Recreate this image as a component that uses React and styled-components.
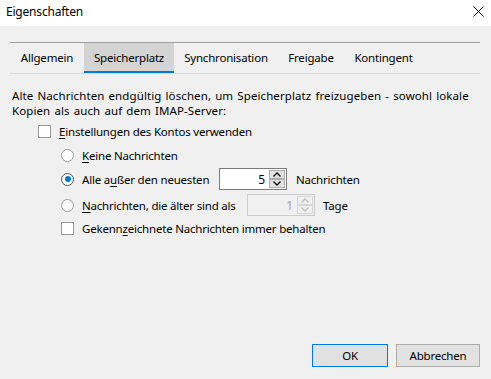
import React from 'react'
import styled, { createGlobalStyle } from 'styled-components'

const GlobalStyle = createGlobalStyle`
  html, body {
    margin: 0;
    padding: 0;
    background: #f0f0f0;
  }
  body {
    font-family: "Noto Sans", "Segoe UI", sans-serif;
    font-size: 11.5px;
    letter-spacing: -0.2px;
    color: #000;
  }
`;

const tabs = [
  { label: 'Allgemein', width: 74 },
  { label: 'Speicherplatz', width: 90, active: true },
  { label: 'Synchronisation', width: 104 },
  { label: 'Freigabe', width: 66 },
  { label: 'Kontingent', width: 79 },
];

function Chevron({ up, disabled }) {
  return (
    <svg width="8" height="5" viewBox="0 0 8 5">
      <polyline
        points={up ? '0.5,4.5 4,1 7.5,4.5' : '0.5,0.5 4,4 7.5,0.5'}
        fill="none"
        stroke={disabled ? '#bfbfbf' : '#000'}
        strokeWidth="1.3"
      />
    </svg>
  );
}

function Spin({ value, disabled }) {
  return (
    <SpinBox $disabled={disabled}>
      <SpinValue $disabled={disabled}>{value}</SpinValue>
      <SpinButtons>
        <SpinButton $disabled={disabled}><Chevron up disabled={disabled} /></SpinButton>
        <SpinButton $disabled={disabled}><Chevron disabled={disabled} /></SpinButton>
      </SpinButtons>
    </SpinBox>
  );
}

function App() {
  return (
    <Window>
      <GlobalStyle />
      <TitleBar>
        <Title>Eigenschaften</Title>
        <svg width="11" height="11" viewBox="0 0 11 11">
          <path d="M0.5 0.5 L10.5 10.5 M10.5 0.5 L0.5 10.5" stroke="#000" strokeWidth="1" />
        </svg>
      </TitleBar>
      <Body>
        <TabStrip>
          {tabs.map(t => (
            <Tab key={t.label} $active={t.active} style={{ width: t.width }}>
              {t.label}
            </Tab>
          ))}
        </TabStrip>
        <Panel>
          <Description>
            Alte Nachrichten endgültig löschen, um Speicherplatz freizugeben - sowohl lokale<br />
            Kopien als auch auf dem IMAP-Server:
          </Description>
          <Row $h={23} $indent={26} $top={2}>
            <CheckBox />
            <Label><u>E</u>instellungen des Kontos verwenden</Label>
          </Row>
          <Row $h={24} $indent={49}>
            <Radio />
            <Label><u>K</u>eine Nachrichten</Label>
          </Row>
          <Row $h={24} $indent={49}>
            <Radio $checked />
            <Label $w={137}>Alle a<u>u</u>ßer den neuesten</Label>
            <Spin value="5" />
            <After>Nachrichten</After>
          </Row>
          <Row $h={28} $indent={49}>
            <Radio />
            <Label $w={165}><u>N</u>achrichten, die älter sind als</Label>
            <Spin value="1" disabled />
            <After $gap={8}>Tage</After>
          </Row>
          <Row $h={18} $indent={49}>
            <CheckBox />
            <Label>Gekenn<u>z</u>eichnete Nachrichten immer behalten</Label>
          </Row>
        </Panel>
        <Footer>
          <Button $default>OK</Button>
          <Button $width={84}>Abbrechen</Button>
        </Footer>
      </Body>
    </Window>
  );
}

export default App;

const Window = styled.div`
  width: 491px;
  height: 379px;
  display: flex;
  flex-direction: column;
  background: #f0f0f0;
  overflow: hidden;
`;

const TitleBar = styled.div`
  height: 26px;
  background: #fff;
  display: flex;
  align-items: center;
  justify-content: space-between;
  padding: 0 7px 3px 6px;
  box-sizing: border-box;
`;

const Title = styled.span`
  font-size: 12px;
  line-height: 1;
`;

const Body = styled.div`
  flex: 1;
  display: flex;
  flex-direction: column;
  padding: 16px 11px 12px 10px;
`;

const TabStrip = styled.div`
  display: flex;
  border-top: 1px solid #a0a0a0;
  border-bottom: 1px solid #d9d9d9;
  height: 30px;
`;

const Tab = styled.div`
  display: flex;
  align-items: center;
  justify-content: center;
  white-space: nowrap;
  padding-bottom: 1px;
  box-sizing: border-box;
  background: ${p => (p.$active ? '#d4d4d4' : 'transparent')};
  box-shadow: ${p => (p.$active ? 'inset 0 -2px 0 #0078d7' : 'none')};
`;

const Panel = styled.div`
  padding: 14px 2px 0;
  display: flex;
  flex-direction: column;
`;

const Description = styled.p`
  margin: 0;
  line-height: 15px;
  white-space: nowrap;
  letter-spacing: 0.1px;
  word-spacing: 1px;
`;

const Row = styled.div`
  display: flex;
  align-items: center;
  height: ${p => p.$h}px;
  margin-top: ${p => p.$top || 0}px;
  padding-left: ${p => p.$indent}px;
  white-space: nowrap;
`;

const CheckBox = styled.span`
  width: 13px;
  height: 13px;
  box-sizing: border-box;
  border: 1px solid #999;
  background: #fff;
  flex: none;
`;

const Radio = styled.span`
  width: 13px;
  height: 13px;
  box-sizing: border-box;
  border-radius: 50%;
  border: 1px solid ${p => (p.$checked ? '#555' : '#999')};
  background: #fff;
  flex: none;
  display: flex;
  align-items: center;
  justify-content: center;
  &::after {
    content: '';
    display: ${p => (p.$checked ? 'block' : 'none')};
    width: 6px;
    height: 6px;
    border-radius: 50%;
    background: #0078d7;
  }
`;

const Label = styled.span`
  margin-left: 8px;
  width: ${p => (p.$w ? `${p.$w}px` : 'auto')};
  flex: none;
  u {
    text-decoration-thickness: 1px;
    text-underline-offset: 2px;
  }
`;

const After = styled.span`
  margin-left: ${p => p.$gap || 9}px;
`;

const SpinBox = styled.div`
  width: 68px;
  height: 22px;
  box-sizing: border-box;
  border: 1px solid ${p => (p.$disabled ? '#cccccc' : '#7a7a7a')};
  background: ${p => (p.$disabled ? '#f0f0f0' : '#fff')};
  display: flex;
  align-items: center;
  padding: 0 1px 0 0;
  flex: none;
`;

const SpinValue = styled.span`
  flex: 1;
  text-align: right;
  padding-right: 4px;
  font-size: 12px;
  color: ${p => (p.$disabled ? '#a59bb5' : '#000')};
`;

const SpinButtons = styled.div`
  display: flex;
  flex-direction: column;
`;

const SpinButton = styled.div`
  width: 16px;
  height: 9px;
  box-sizing: border-box;
  border: 1px solid ${p => (p.$disabled ? '#d6d6d6' : '#adadad')};
  background: ${p => (p.$disabled ? '#f0f0f0' : '#e1e1e1')};
  display: flex;
  align-items: center;
  justify-content: center;
`;

const Footer = styled.div`
  margin-top: auto;
  display: flex;
  justify-content: flex-end;
  gap: 8px;
`;

const Button = styled.div`
  width: ${p => p.$width || 76}px;
  height: 23px;
  box-sizing: border-box;
  border: 1px solid ${p => (p.$default ? '#0078d7' : '#adadad')};
  background: #e1e1e1;
  display: flex;
  align-items: center;
  justify-content: center;
  padding-bottom: 1px;
`;
